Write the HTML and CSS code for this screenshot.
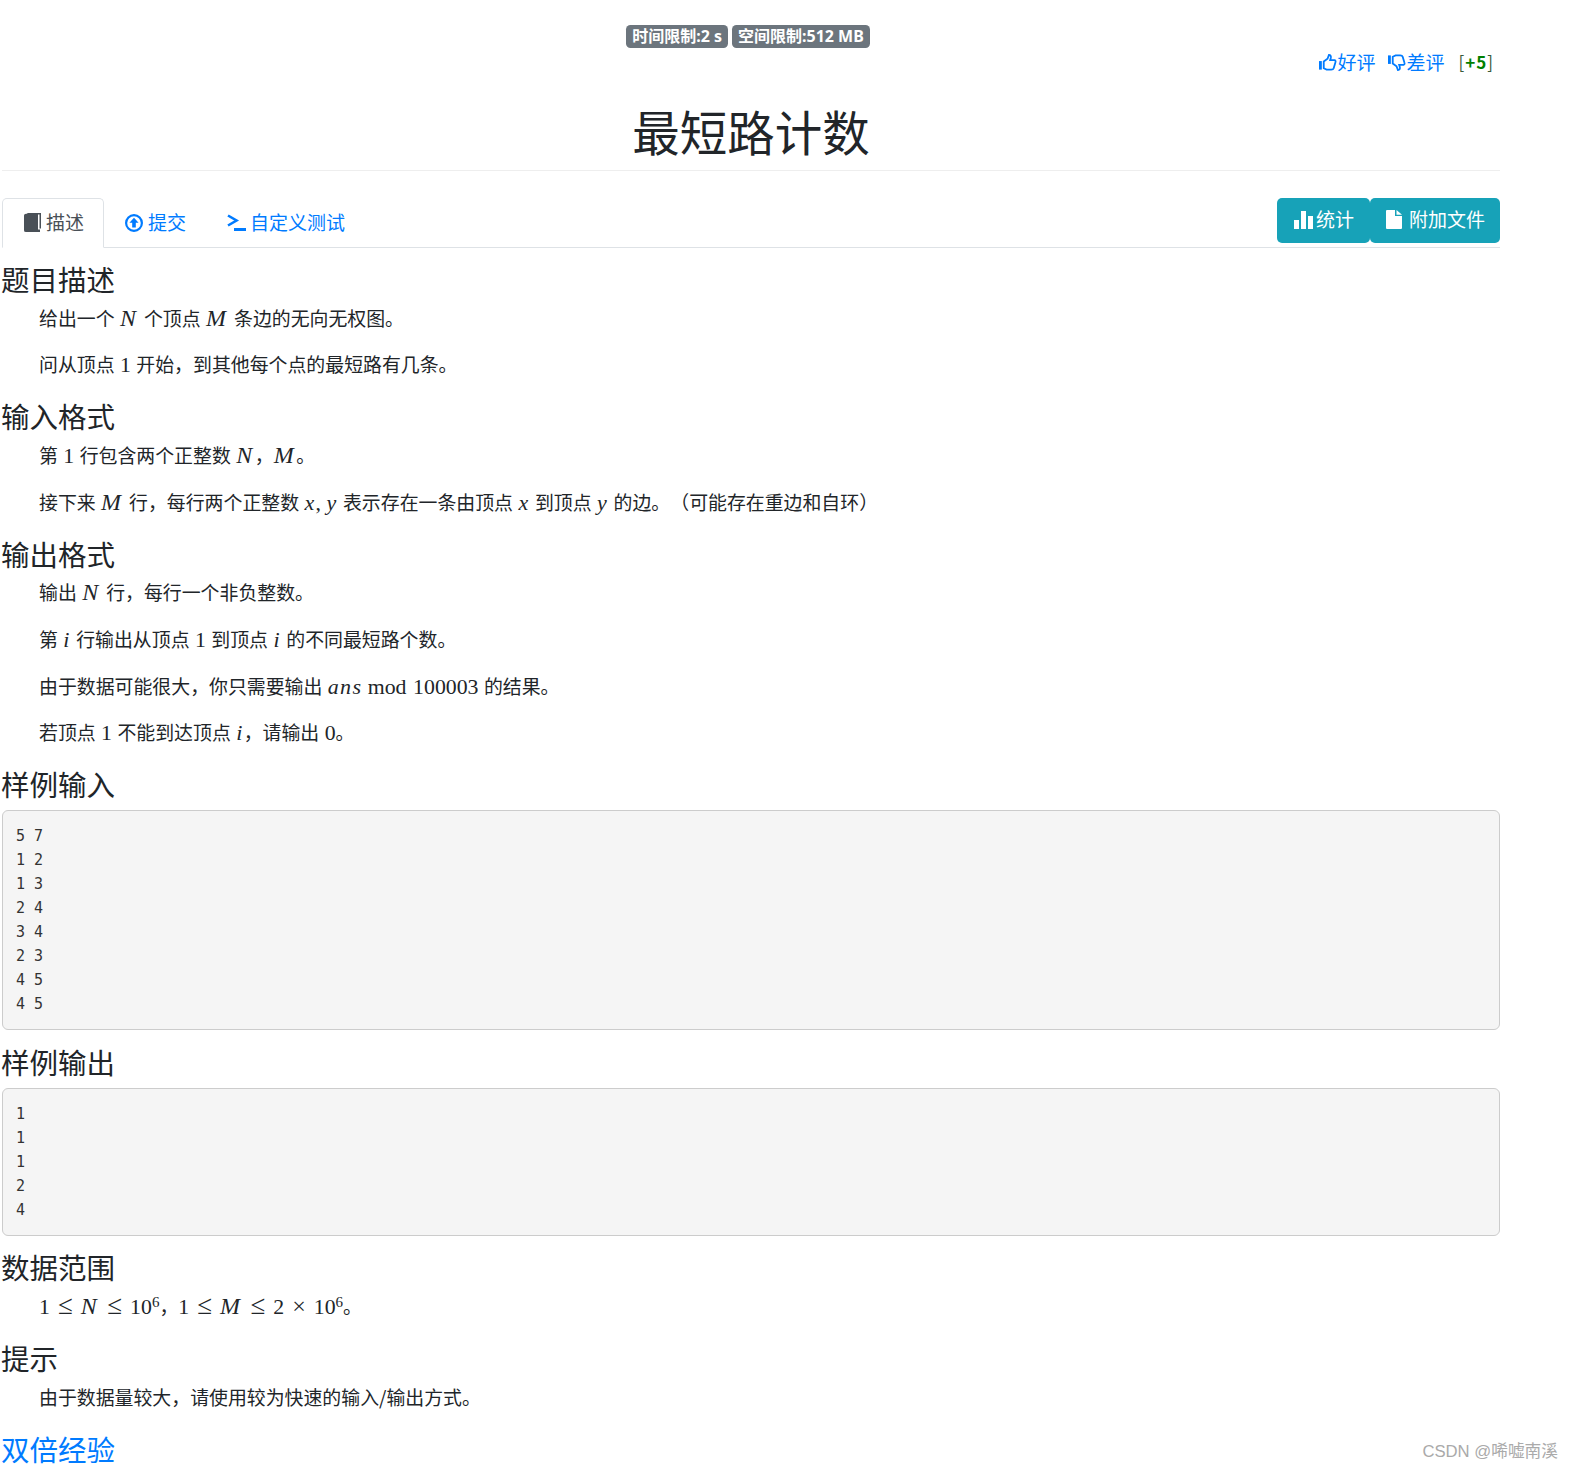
FILE: index.html
```html
<!DOCTYPE html>
<html lang="zh-CN">
<head>
<meta charset="utf-8">
<title>最短路计数</title>
<link rel="stylesheet" href="styles.css">
</head>
<body>
<main class="page">
  <div class="limits">
    <span class="badge">时间限制:2 s</span>
    <span class="badge">空间限制:512 MB</span>
  </div>
  <div class="rating">
    <a class="rate" href="#"><svg class="ico-hand" viewBox="0 0 19 19"><rect x="0" y="8" width="3" height="9" fill="currentColor"/><path d="M5 8.5 9 5.5 10.5 1.5 Q13 1.5 12.5 4.5 L11.8 7 H16.5 Q18 7.5 17.3 9.5 L15.5 15.5 Q15 17 13 17 H8 L5 15.5 Z" fill="none" stroke="currentColor" stroke-width="1.9"/></svg>好评</a>
    <a class="rate" href="#"><svg class="ico-hand" viewBox="0 0 19 19"><rect x="0" y="2" width="3" height="9" fill="currentColor"/><path d="M5 10.5 9 13.5 10.5 17.5 Q13 17.5 12.5 14.5 L11.8 12 H16.5 Q18 11.5 17.3 9.5 L15.5 3.5 Q15 2 13 2 H8 L5 3.5 Z" fill="none" stroke="currentColor" stroke-width="1.9"/></svg>差评</a>
    <span class="score">[<strong>+5</strong>]</span>
  </div>
  <h1 class="title">最短路计数</h1>

  <div class="tabbar">
    <ul class="tabs">
      <li class="tab active"><svg class="ico-book" viewBox="0 0 17 19"><path d="M3 0H17V15.5H15.5V1.5H4Z" fill="#495057"/><path d="M0 2.5Q0 .8 2 .8H14V17H2.5Q0 17 0 18Z" fill="#495057"/><path d="M0 17.5Q.3 16.5 2.5 16.5H16V19H2Q0 19 0 17.5Z" fill="#495057"/></svg>描述</li>
      <li class="tab"><a href="#"><svg class="ico-up" viewBox="0 0 18 18"><circle cx="9" cy="9" r="7.9" fill="none" stroke="currentColor" stroke-width="2.2"/><path d="M9 3.8 13.6 8.8H10.8V13.6H7.2V8.8H4.4Z" fill="currentColor"/></svg>提交</a></li>
      <li class="tab tab-term"><a href="#"><svg class="ico-term" viewBox="0 0 19 17"><path d="M1 1.5 9.5 6.5 1 11.5" fill="none" stroke="currentColor" stroke-width="2.6"/><rect x="7" y="14" width="12" height="3" fill="currentColor"/></svg>自定义测试</a></li>
    </ul>
    <div class="actions">
      <a class="btn btn-stat" href="#"><svg class="ico-bars" viewBox="0 0 19 18"><rect x="0" y="9" width="5" height="9" fill="#fff"/><rect x="7" y="0" width="5" height="18" fill="#fff"/><rect x="14" y="5" width="5" height="13" fill="#fff"/></svg>统计</a>
      <a class="btn btn-file" href="#"><svg class="ico-file" viewBox="0 0 16 19"><path d="M0 1Q0 0 1 0H9V6H16V18Q16 19 15 19H1Q0 19 0 18Z" fill="#fff"/><path d="M10.5 0 16 4.8H10.5Z" fill="#fff"/></svg>附加文件</a>
    </div>
  </div>

  <h3>题目描述</h3>
  <p>给出一个 <i class="cap">N</i> 个顶点 <i class="cap">M</i> 条边的无向无权图。</p>
  <p>问从顶点 <span class="num">1</span> 开始，到其他每个点的最短路有几条。</p>

  <h3>输入格式</h3>
  <p>第 <span class="num">1</span> 行包含两个正整数 <i class="cap">N</i>，<i class="cap">M</i>。</p>
  <p>接下来 <i class="cap">M</i> 行，每行两个正整数 <i class="var">x</i><span class="num">,</span> <i class="var">y</i> 表示存在一条由顶点 <i class="var">x</i> 到顶点 <i class="var">y</i> 的边。（可能存在重边和自环）</p>

  <h3>输出格式</h3>
  <p>输出 <i class="cap">N</i> 行，每行一个非负整数。</p>
  <p>第 <i class="var">i</i> 行输出从顶点 <span class="num">1</span> 到顶点 <i class="var">i</i> 的不同最短路个数。</p>
  <p>由于数据可能很大，你只需要输出 <i class="var">ans</i> <span class="num">mod 100003</span> 的结果。</p>
  <p>若顶点 <span class="num">1</span> 不能到达顶点 <i class="var">i</i>，请输出 <span class="num">0</span>。</p>

  <h3>样例输入</h3>
  <pre>5 7
1 2
1 3
2 4
3 4
2 3
4 5
4 5</pre>

  <h3>样例输出</h3>
  <pre>1
1
1
2
4</pre>

  <h3>数据范围</h3>
  <p><span class="num">1</span><span class="rel">≤</span><i class="cap">N</i><span class="rel">≤</span><span class="num">10<sup>6</sup></span>，<span class="num">1</span><span class="rel">≤</span><i class="cap">M</i><span class="rel">≤</span><span class="num">2</span><span class="rel rel-times">×</span><span class="num">10<sup>6</sup></span>。</p>

  <h3>提示</h3>
  <p>由于数据量较大，请使用较为快速的输入/输出方式。</p>

  <h3><a href="#">双倍经验</a></h3>
</main>
<div class="watermark">CSDN @唏嘘南溪</div>
</body>
</html>
```
FILE: styles.css
```css
* { box-sizing: border-box; }
html, body { margin: 0; padding: 0; height: 1469px; overflow: hidden; background: #fff; }
body {
  font-family: "Noto Sans CJK SC", "Noto Sans", sans-serif;
  font-size: 19px;
  line-height: 28.5px;
  color: #212529;
  position: relative;
}
a { color: #007bff; text-decoration: none; }
.page { width: 1498px; margin-left: 2px; padding-top: 25px; }

.limits { display: flex; justify-content: center; gap: 4px; height: 23px; padding-right: 6px; }
.badge {
  background: #6c757d;
  color: #fff;
  font-weight: 700;
  font-size: 16px;
  line-height: 23px;
  padding: 0 6px;
  border-radius: 4.5px;
  font-family: "Noto Sans", "Noto Sans CJK SC", sans-serif;
}

.rating { display: flex; justify-content: flex-end; align-items: center; height: 28px; padding-right: 6px; font-size: 19px; }
.rate { display: flex; align-items: center; margin-right: 13px; }
.ico-hand { width: 18px; height: 19px; }
.score { font-size: 17px; color: #3a5a3a; margin-left: 1px; letter-spacing: 1px; }
.score strong { color: #008000; font-weight: 700; }

.title {
  margin: 26px 0 0;
  padding-bottom: 8px;
  font-size: 47.5px;
  font-weight: 400;
  line-height: 57px;
  text-align: center;
  border-bottom: 1px solid #eee;
  height: 69px;
}

.tabbar { display: flex; justify-content: space-between; align-items: flex-start; margin-top: 27px; height: 50px; border-bottom: 1px solid #dee2e6; }
.tabs { list-style: none; margin: 0; padding: 0; display: flex; height: 50px; }
.tab { height: 50px; padding: 0 21px 1px; display: flex; align-items: center; white-space: nowrap; }
.tab a { display: flex; align-items: center; }
.tab-term { padding-left: 20px; }
.tab.active { color: #495057; background: #fff; border: 1px solid #dee2e6; border-bottom-color: #fff; border-radius: 5px 5px 0 0; width: 102px; padding-left: 21px; padding-right: 0; }
.ico-book { width: 17px; height: 19px; margin-right: 5px; }
.ico-up { width: 18px; height: 18px; margin-right: 5px; }
.ico-term { width: 19px; height: 17px; margin-right: 4px; }

.actions { display: flex; background: #fff; }
.btn { display: flex; align-items: center; height: 45px; padding-bottom: 2px; background: #17a2b8; color: #fff; border-radius: 5px; }
.btn-stat { width: 93px; padding-left: 17px; }
.btn-file { width: 130px; padding-left: 16px; }
.ico-bars { width: 19px; height: 18px; margin-right: 3px; }
.ico-file { width: 16px; height: 19px; margin-right: 7px; }

h3 { margin: 0 0 8px -1px; font-size: 28.5px; font-weight: 400; line-height: 33.6px; }
.tabbar + h3 { margin-top: 14px; }
p { margin: 0 0 18.2px; padding-left: 37px; white-space: nowrap; font-size: 18.9px; word-spacing: 1.2px; text-spacing-trim: space-all; }
p + h3 { margin-top: 20.5px; }

i, .num, .rel { font-family: "Liberation Serif", serif; line-height: 1; }
.cap { font-size: 24px; letter-spacing: 2.5px; }
.var { font-size: 22px; letter-spacing: 1.3px; }
.num { font-size: 21.8px; }
.rel { font-size: 27px; margin: 0 8px; }
.rel-times { font-size: 24px; }
sup { font-size: 15px; line-height: 0; vertical-align: 7px; }

pre {
  margin: 9.5px 0 14.5px;
  padding: 13px;
  background: #f5f5f5;
  border: 1px solid #ccc;
  border-radius: 6px;
  font-family: "DejaVu Sans Mono", monospace;
  font-size: 15px;
  line-height: 24px;
  color: #333;
}

.watermark {
  position: absolute;
  right: 15px;
  bottom: 7px;
  font-family: "Liberation Sans", "Noto Sans CJK SC", sans-serif;
  font-size: 16.7px;
  line-height: 20px;
  color: #aaa;
}
```
